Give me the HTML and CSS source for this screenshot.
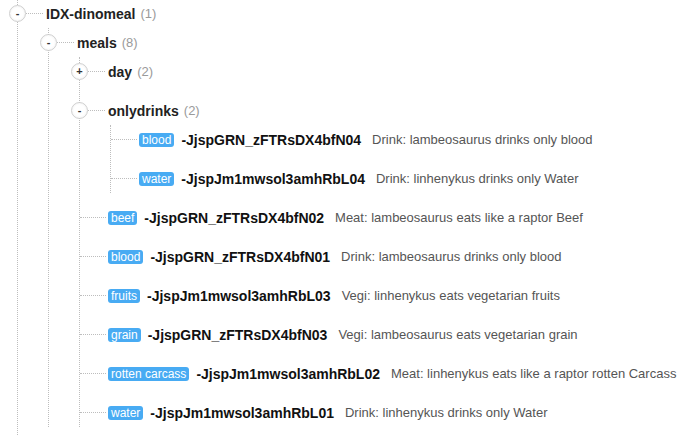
FILE: index.html
```html
<!DOCTYPE html>
<html>
<head>
<meta charset="utf-8">
<link rel="stylesheet" href="styles.css">
</head>
<body>
<ul class="tree">
  <li>
    <div class="row"><span class="toggle">-</span><span class="conn"></span><span class="name">IDX-dinomeal</span><span class="count">(1)</span></div>
    <ul>
      <li>
        <div class="row"><span class="toggle">-</span><span class="conn"></span><span class="name">meals</span><span class="count">(8)</span></div>
        <ul>
          <li>
            <div class="row"><span class="toggle">+</span><span class="conn"></span><span class="name">day</span><span class="count">(2)</span></div>
          </li>
          <li>
            <div class="row"><span class="toggle">-</span><span class="conn"></span><span class="name">onlydrinks</span><span class="count">(2)</span></div>
            <ul>
              <li><div class="row leaf"><span class="conn"></span><span class="badge">blood</span><span class="id">-JjspGRN_zFTRsDX4bfN04</span><span class="desc">Drink: lambeosaurus drinks only blood</span></div></li>
              <li><div class="row leaf"><span class="conn"></span><span class="badge">water</span><span class="id">-JjspJm1mwsol3amhRbL04</span><span class="desc">Drink: linhenykus drinks only Water</span></div></li>
            </ul>
          </li>
          <li><div class="row leaf"><span class="conn"></span><span class="badge">beef</span><span class="id">-JjspGRN_zFTRsDX4bfN02</span><span class="desc">Meat: lambeosaurus eats like a raptor Beef</span></div></li>
          <li><div class="row leaf"><span class="conn"></span><span class="badge">blood</span><span class="id">-JjspGRN_zFTRsDX4bfN01</span><span class="desc">Drink: lambeosaurus drinks only blood</span></div></li>
          <li><div class="row leaf"><span class="conn"></span><span class="badge">fruits</span><span class="id">-JjspJm1mwsol3amhRbL03</span><span class="desc">Vegi: linhenykus eats vegetarian fruits</span></div></li>
          <li><div class="row leaf"><span class="conn"></span><span class="badge">grain</span><span class="id">-JjspGRN_zFTRsDX4bfN03</span><span class="desc">Vegi: lambeosaurus eats vegetarian grain</span></div></li>
          <li><div class="row leaf"><span class="conn"></span><span class="badge">rotten carcass</span><span class="id">-JjspJm1mwsol3amhRbL02</span><span class="desc">Meat: linhenykus eats like a raptor rotten Carcass</span></div></li>
          <li><div class="row leaf"><span class="conn"></span><span class="badge">water</span><span class="id">-JjspJm1mwsol3amhRbL01</span><span class="desc">Drink: linhenykus drinks only Water</span></div></li>
        </ul>
      </li>
    </ul>
  </li>
</ul>
</body>
</html>
```
FILE: styles.css
```css
html, body {
  margin: 0;
  padding: 0;
  background: #fff;
  font-family: "Liberation Sans", Arial, sans-serif;
  overflow: hidden;
}

ul {
  list-style: none;
  margin: 0;
  padding: 0;
}

.tree {
  margin: -1px 0 0 17px;
  border-left: 1px dotted #bdbdbd;
  min-height: 460px;
}

.tree ul {
  margin-left: 30px;
  border-left: 1px dotted #bdbdbd;
}

li + li {
  margin-top: 10px;
}

.row {
  height: 29px;
  display: flex;
  align-items: center;
  white-space: nowrap;
}

.toggle {
  flex: none;
  width: 17px;
  height: 17px;
  box-sizing: border-box;
  margin-left: -9px;
  border: 1px solid #d0d0d0;
  border-radius: 50%;
  background: radial-gradient(circle, #ffffff 50%, #ececec 100%);
  display: flex;
  align-items: center;
  justify-content: center;
  font-size: 11px;
  line-height: 11px;
  font-weight: bold;
  color: #333;
}

.conn {
  flex: none;
  width: 17px;
  height: 0;
  border-top: 1px dotted #bdbdbd;
  margin-right: 3px;
}

.leaf .conn {
  width: 26px;
  margin-right: 2px;
}

.name {
  font-size: 14px;
  font-weight: bold;
  color: #222;
}

.count {
  font-size: 13px;
  color: #9a9a9a;
  margin-left: 5px;
}

.badge {
  background: #48abf3;
  color: #fff;
  font-size: 12px;
  line-height: 14px;
  padding: 0 3px;
  border-radius: 3px;
}

.id {
  font-size: 14px;
  font-weight: bold;
  color: #111;
  margin-left: 7px;
}

.desc {
  font-size: 13px;
  color: #555;
  margin-left: 11px;
}
```
